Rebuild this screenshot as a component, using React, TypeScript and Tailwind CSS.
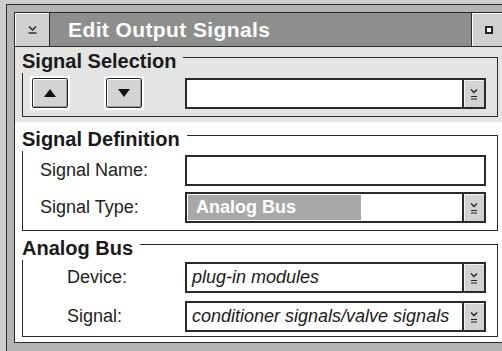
import React from 'react';

function DropButton() {
  return (
    <div className="w-[22px] h-full shrink-0 border-l-2 border-[#2a2a2a] bg-[#d2d2d2] shadow-[inset_1px_1px_0_#f4f4f4] flex items-center justify-center">
      <svg width="8" height="12" viewBox="0 0 8 12">
        <path d="M1 1.5 L4 4.5 L7 1.5" stroke="#222" strokeWidth="1.3" fill="none" />
        <path d="M1 8.5h6M1 11h6" stroke="#222" strokeWidth="1" />
      </svg>
    </div>
  );
}

function Combo({ children }: { children?: React.ReactNode }) {
  return (
    <div className="w-[301px] h-[31px] border-2 border-[#2a2a2a] bg-white flex">
      <div className="flex-1 flex items-center overflow-hidden">{children}</div>
      <DropButton />
    </div>
  );
}

function ArrowButton({ down }: { down?: boolean }) {
  return (
    <div className="bg-white p-[2px]">
      <div className="w-[36px] h-[30px] border border-[#2a2a2a] rounded-[2px] bg-[#d4d4d4] shadow-[inset_1px_1px_0_#fff,inset_-1px_-1px_0_#9a9a9a] flex items-center justify-center">
        <svg width="12" height="8" viewBox="0 0 12 8">
          {down ? <path d="M0 0h12L6 8z" fill="#111" /> : <path d="M0 8h12L6 0z" fill="#111" />}
        </svg>
      </div>
    </div>
  );
}

function GroupHeader({ title }: { title: string }) {
  return (
    <div className="flex h-[23px]">
      <span className="text-[20px] leading-[23px] font-bold text-[#1a1a1a]">{title}</span>
      <div className="flex-1 ml-[7px] mt-[7px] border-t border-r border-[#2a2a2a]" />
    </div>
  );
}

export default function App() {
  return (
    <div className="w-[502px] h-[351px] overflow-hidden bg-[#cdcdcd] pt-[4px] pl-[6px] font-['Liberation_Sans',Arial,sans-serif]">
      <div className="h-[347px] w-[520px] border-l border-t border-[#2a2a2a] bg-[#b4b4b4] pl-[7px] pt-[7px]">
        <div className="w-[520px] border-l border-t border-b border-[#2a2a2a]">
          {/* Title bar */}
          <div className="h-[34px] bg-[#8e8e8e] border-b border-[#2a2a2a] flex items-stretch">
            <div className="w-[35px] bg-[#d0d0d0] border-r border-[#2a2a2a] shadow-[inset_1px_1px_0_#fff] flex items-center justify-center">
              <svg width="9" height="9" viewBox="0 0 9 9">
                <path d="M1 1.5 L4.5 5 L8 1.5" stroke="#222" strokeWidth="1.4" fill="none" />
                <path d="M0.5 8h8" stroke="#222" strokeWidth="1.4" />
              </svg>
            </div>
            <span className="ml-[18px] text-[21px] leading-[33px] font-bold text-white tracking-[0.4px]">Edit Output Signals</span>
            <div className="ml-auto mr-[28px] w-[35px] bg-[#d0d0d0] border-l border-[#2a2a2a] shadow-[inset_1px_1px_0_#fff] flex items-center justify-center">
              <div className="w-[8px] h-[8px] border-2 border-[#222] bg-white" />
            </div>
          </div>

          {/* Signal Selection */}
          <div className="h-[75px] bg-[#e4e4e4] pl-[7px] pr-[4px] pt-[3px] w-[487px]">
            <GroupHeader title="Signal Selection" />
            <div className="h-[44px] border-l border-r border-b border-[#2a2a2a] flex items-start pt-[3px] pl-[7px]">
              <ArrowButton />
              <div className="ml-[34px]">
                <ArrowButton down />
              </div>
              <div className="ml-[41px] mt-[2px]">
                <Combo />
              </div>
            </div>
          </div>

          {/* White area */}
          <div className="h-[220px] bg-white pl-[7px] pr-[4px] pt-[6px] w-[487px]">
            <GroupHeader title="Signal Definition" />
            <div className="h-[80px] border-l border-r border-b border-[#2a2a2a] pl-[17px] pt-[4px]">
              <div className="flex items-center">
                <span className="w-[145px] text-[18px] text-[#222]">Signal Name:</span>
                <div className="w-[301px] h-[31px] border-2 border-[#2a2a2a] bg-white" />
              </div>
              <div className="flex items-center mt-[6px]">
                <span className="w-[145px] text-[18px] text-[#222]">Signal Type:</span>
                <Combo>
                  <div className="ml-[1px] h-[25px] w-[173px] bg-[#a8a8a8] flex items-center pl-[8px]">
                    <span className="text-[18px] font-bold text-white">Analog Bus</span>
                  </div>
                </Combo>
              </div>
            </div>

            <div className="mt-[6px]">
              <GroupHeader title="Analog Bus" />
            </div>
            <div className="h-[77px] border-l border-r border-b border-[#2a2a2a] pl-[44px] pt-[2px]">
              <div className="flex items-center">
                <span className="w-[118px] text-[18px] text-[#222]">Device:</span>
                <Combo>
                  <span className="pl-[5px] text-[18px] italic text-[#1a1a1a] whitespace-nowrap">plug-in modules</span>
                </Combo>
              </div>
              <div className="flex items-center mt-[8px]">
                <span className="w-[118px] text-[18px] text-[#222]">Signal:</span>
                <Combo>
                  <span className="pl-[5px] text-[18px] italic text-[#1a1a1a] whitespace-nowrap">conditioner signals/valve signals</span>
                </Combo>
              </div>
            </div>
          </div>
        </div>
      </div>
    </div>
  );
}
